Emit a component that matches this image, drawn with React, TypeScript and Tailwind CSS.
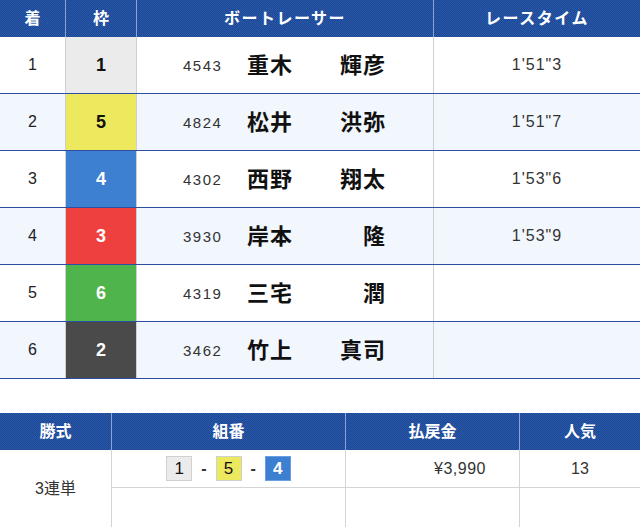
import React from "react";

const font = { fontFamily: '"Liberation Sans", "Noto Sans CJK JP", sans-serif' };

const rows = [
  { rank: "1", waku: "1", id: "4543", sei: "重木", mei: "輝彦", time: "1'51\"3" },
  { rank: "2", waku: "5", id: "4824", sei: "松井", mei: "洪弥", time: "1'51\"7" },
  { rank: "3", waku: "4", id: "4302", sei: "西野", mei: "翔太", time: "1'53\"6" },
  { rank: "4", waku: "3", id: "3930", sei: "岸本", mei: "隆", time: "1'53\"9" },
  { rank: "5", waku: "6", id: "4319", sei: "三宅", mei: "潤", time: "" },
  { rank: "6", waku: "2", id: "3462", sei: "竹上", mei: "真司", time: "" },
];

const wakuClass: Record<string, string> = {
  "1": "bg-[#ebebeb] text-[#111]",
  "2": "bg-[#4a4a4a] text-white",
  "3": "bg-[#ef4040] text-white",
  "4": "bg-[#3d7fd1] text-white",
  "5": "bg-[#ede95e] text-[#111]",
  "6": "bg-[#4fb44b] text-white",
};

const headerBg =
  "bg-[#22509f] bg-[repeating-conic-gradient(#1c4596_0%_25%,#2a5ba9_0%_50%)] [background-size:2px_2px]";

export default function App() {
  return (
    <div className="w-[640px] h-[527px] overflow-hidden bg-white text-[#222]" style={font}>
      {/* Result table */}
      <div className="w-[640px]">
        <div className={`flex h-[37px] text-white font-bold text-[16px] ${headerBg}`}>
          <div className="w-[66px] flex items-center justify-center border-r border-[#8fa3d2]">着</div>
          <div className="w-[71px] flex items-center justify-center border-r border-[#8fa3d2]">枠</div>
          <div className="w-[297px] flex items-center justify-center tracking-[1.5px] border-r border-[#8fa3d2]">ボートレーサー</div>
          <div className="flex-1 flex items-center justify-center tracking-[1.5px]">レースタイム</div>
        </div>
        {rows.map((r, i) => (
          <div
            key={r.rank}
            className={`flex h-[57px] border-b border-[#2c4fa3] ${i % 2 === 1 ? "bg-[#f2f6fd]" : "bg-white"}`}
          >
            <div className="w-[66px] flex items-center justify-center text-[16px] border-r border-[#cfcfcf]">
              {r.rank}
            </div>
            <div
              className={`w-[71px] flex items-center justify-center text-[18px] font-bold border-r border-[#cfcfcf] ${wakuClass[r.waku]}`}
            >
              {r.waku}
            </div>
            <div className="w-[297px] flex items-center border-r border-[#cfcfcf] pl-[46px]">
              <span className="w-[64px] text-[15px] tracking-[1.5px] text-[#333] pt-[3px]">{r.id}</span>
              <span className="w-[139px] flex justify-between text-[22px] font-bold text-[#111] tracking-[1px]">
                <span>{r.sei}</span>
                <span>{r.mei}</span>
              </span>
            </div>
            <div className="flex-1 flex items-center justify-center text-[16px] tracking-[1px] text-[#333]">
              {r.time}
            </div>
          </div>
        ))}
      </div>

      {/* Payout table */}
      <div className="mt-[34px] w-[640px]">
        <div className={`flex h-[37px] text-white font-bold text-[16px] ${headerBg}`}>
          <div className="w-[112px] flex items-center justify-center border-r border-[#8fa3d2]">勝式</div>
          <div className="w-[234px] flex items-center justify-center border-r border-[#8fa3d2]">組番</div>
          <div className="w-[174px] flex items-center justify-center border-r border-[#8fa3d2]">払戻金</div>
          <div className="flex-1 flex items-center justify-center">人気</div>
        </div>
        <div className="flex h-[120px]">
          <div className="w-[112px] flex items-center justify-center text-[16px] text-[#333] border-r border-[#d4d4d4] pb-[43px]">
            3連単
          </div>
          <div className="flex-1 flex flex-col">
            <div className="flex h-[38px] border-b border-[#d4d4d4]">
              <div className="w-[234px] flex items-center justify-center gap-[9px] border-r border-[#d4d4d4]">
                <span className="w-[26px] h-[25px] flex items-center justify-center border border-[#d0d0d0] bg-[#ebebeb] text-[17px] text-[#111]">
                  1
                </span>
                <span className="text-[16px] font-bold text-[#333]">-</span>
                <span className="w-[26px] h-[25px] flex items-center justify-center border border-[#d0d0d0] bg-[#ede95e] text-[17px] text-[#111]">
                  5
                </span>
                <span className="text-[16px] font-bold text-[#333]">-</span>
                <span className="w-[26px] h-[25px] flex items-center justify-center border border-[#6b9ee0] bg-[#3d7fd1] text-[17px] font-bold text-white">
                  4
                </span>
              </div>
              <div className="w-[174px] flex items-center justify-end pr-[33px] text-[16px] tracking-[0.5px] text-[#333] border-r border-[#d4d4d4]">
                ¥3,990
              </div>
              <div className="flex-1 flex items-center justify-center text-[16px] text-[#333]">13</div>
            </div>
            <div className="flex flex-1">
              <div className="w-[234px] border-r border-[#d4d4d4]" />
              <div className="w-[174px] border-r border-[#d4d4d4]" />
              <div className="flex-1" />
            </div>
          </div>
        </div>
      </div>
    </div>
  );
}
